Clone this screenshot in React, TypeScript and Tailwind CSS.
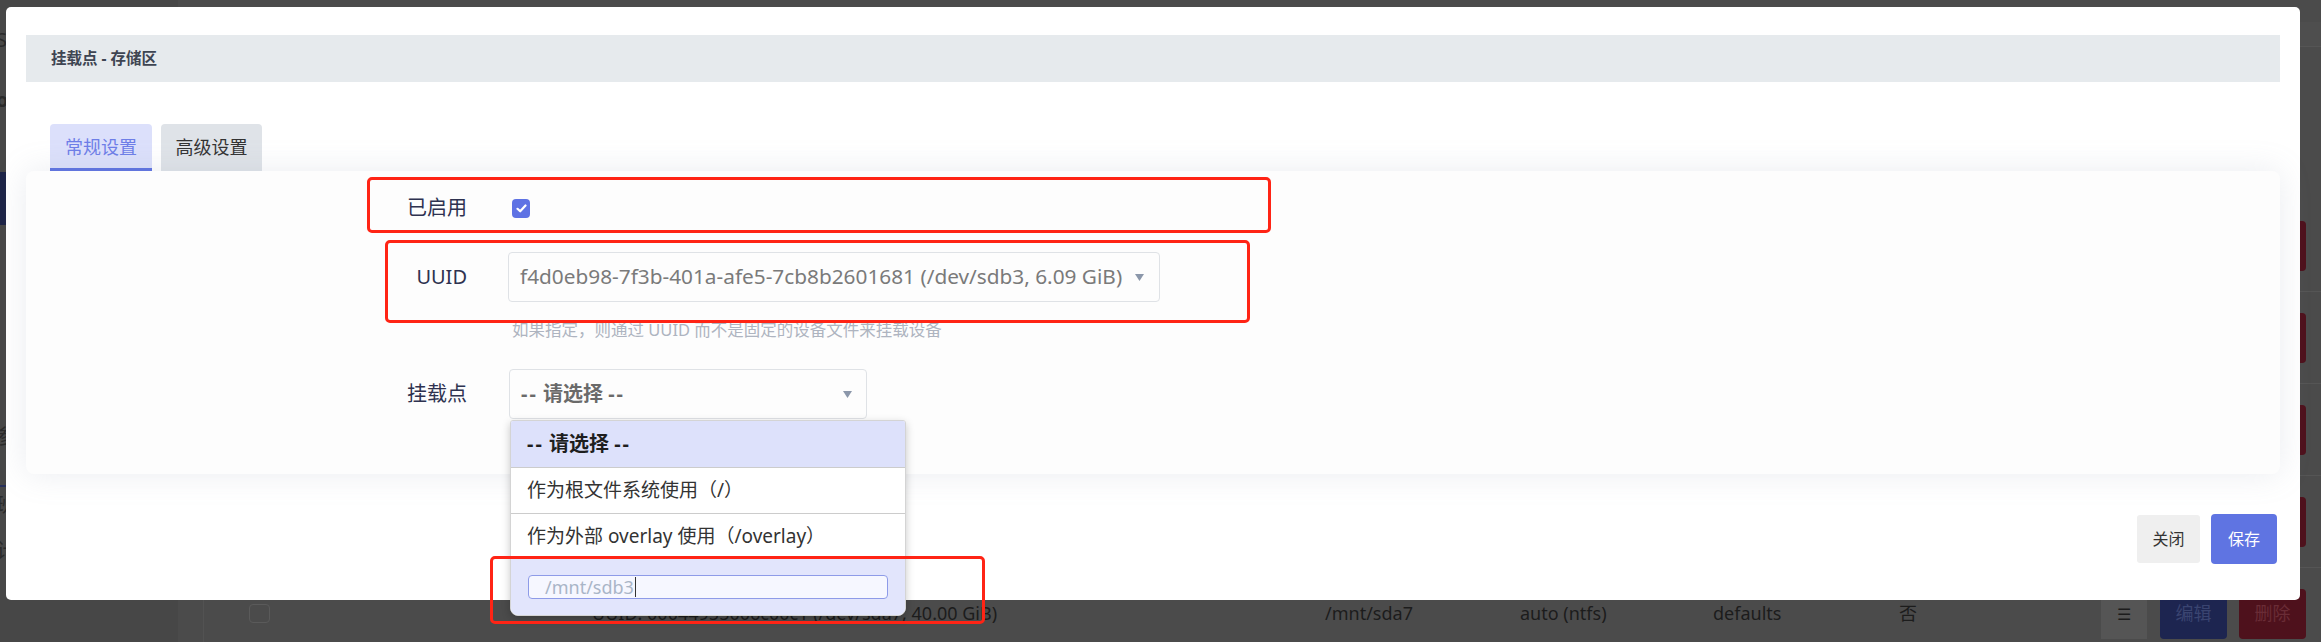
import React from "react";

// Background page (dimmed under the modal overlay)
function BgRow({ uuid, mount, fs }: { uuid: string; mount: string; fs: string }) {
  return (
    <div className="flex h-[92px] shrink-0 items-center border-b border-[#555555] text-[18px] text-[#1c1c1c]">
      <div className="w-[388px] shrink-0 pl-[45px]">
        <div className="h-[19px] w-[21px] rounded-[4px] border border-[#5a5a5a]" />
      </div>
      <div className="w-[733px] shrink-0 whitespace-nowrap">{uuid}</div>
      <div className="w-[195px] shrink-0">{mount}</div>
      <div className="w-[193px] shrink-0">{fs}</div>
      <div className="w-[186px] shrink-0">defaults</div>
      <div className="w-[202px] shrink-0">否</div>
      <div className="flex h-[50px] w-[46px] items-center justify-center bg-[#555555] text-[16px]">☰</div>
      <div className="ml-[13px] flex h-[50px] w-[67px] items-center justify-center rounded-[4px] bg-[#1d2550] text-[#3a4470]">
        编辑
      </div>
      <div className="ml-[12px] flex h-[50px] w-[67px] items-center justify-center rounded-[4px] bg-[#4e111c] text-[#6a2c36]">
        删除
      </div>
    </div>
  );
}

function Arrow() {
  return (
    <svg width="9" height="7" viewBox="0 0 9 7" className="shrink-0">
      <path d="M0 0h9L4.5 7z" fill="#8b97aa" />
    </svg>
  );
}

export default function App() {
  return (
    <div
      className="relative h-[642px] w-[2321px] overflow-hidden bg-[#4b4b4b]"
      style={{ fontFamily: '"Noto Sans", "Noto Sans CJK SC", sans-serif' }}
    >
      {/* page behind */}
      <div className="flex h-full">
        <aside className="flex w-[178px] shrink-0 flex-col bg-[#474747] text-[20px] leading-[24px] text-[#2a2a2a]">
          <div className="mt-[28px] -ml-[4px]">Status</div>
          <div className="mt-[36px] -ml-[4px] font-bold">opkg</div>
          <div className="mt-[60px] h-[53px] bg-[#1d2447]" />
          <div className="mt-[200px] -ml-[4px]">参数设置</div>
          <div className="mt-[36px] h-[2px] bg-[#27305a]" />
          <div className="mt-[6px] -ml-[4px]">班级</div>
          <div className="mt-[22px] -ml-[4px]">计划任务</div>
        </aside>
        <main className="flex flex-1 flex-col pl-[25px]">
          <div className="h-[22px] shrink-0" />
          <div className="h-[25px] shrink-0 border-b border-[#555555] bg-[#4e4e4e]" />
          <div className="h-[153px] shrink-0" />
          <div className="flex flex-col border-l border-[#525252]">
            <BgRow uuid="UUID: 7a1c0e2b9f3d4e55 (/dev/sda1, 100.00 GiB)" mount="/mnt/sda1" fs="auto (ntfs)" />
            <BgRow uuid="UUID: 3b9e0f0a11c2d7e4 (/dev/sda3, 60.00 GiB)" mount="/mnt/sda3" fs="auto (ntfs)" />
            <BgRow uuid="UUID: 5d0c2a8e77b1f903 (/dev/sda5, 80.00 GiB)" mount="/mnt/sda5" fs="auto (ntfs)" />
            <BgRow uuid="UUID: 9e6f4d21c0a3b5e8 (/dev/sda6, 50.00 GiB)" mount="/mnt/sda6" fs="auto (ntfs)" />
            <BgRow uuid="UUID: 00044955006c00c1 (/dev/sda7, 40.00 GiB)" mount="/mnt/sda7" fs="auto (ntfs)" />
          </div>
        </main>
      </div>

      {/* modal */}
      <div className="absolute left-[6px] top-[7px] flex h-[593px] w-[2294px] flex-col rounded-[5px] bg-white px-[20px] pt-[28px]">
        <div className="flex h-[47px] items-center bg-[#e6eaed] pl-[25px] text-[15.5px] font-bold text-[#3e4552]">
          挂载点 - 存储区
        </div>

        <div className="mt-[42px] flex gap-[9px] pl-[24px] text-[18px]">
          <div className="flex h-[47px] w-[102px] items-center justify-center rounded-t-[4px] border-b-[3px] border-[#5d72e2] bg-[#dce0fb] pt-[3px] text-[#6e7ee8]">
            常规设置
          </div>
          <div className="flex h-[47px] w-[101px] items-center justify-center rounded-t-[4px] bg-[#dfe3e8] text-[#333333]">
            高级设置
          </div>
        </div>

        <div className="flex h-[303px] flex-col rounded-[8px] bg-[#fdfdfd] pt-[12px] shadow-[0_0_32px_rgba(136,152,170,0.18)]">
          <div className="flex h-[50px] items-center">
            <div className="w-[441px] text-right text-[20px] text-[#2e3250]">已启用</div>
            <div className="ml-[45px] flex h-[19px] w-[18px] items-center justify-center rounded-[4px] bg-[#5e72e4]">
              <svg width="11" height="9" viewBox="0 0 11 9">
                <path d="M1.5 4.8 4.2 7.3 9.5 1.5" fill="none" stroke="white" strokeWidth="2.2" strokeLinecap="round" strokeLinejoin="round" />
              </svg>
            </div>
          </div>

          <div className="mt-[19px] flex h-[50px] items-center">
            <div className="w-[441px] text-right text-[20px] text-[#2e3250]">UUID</div>
            <div className="ml-[41px] flex h-[50px] w-[652px] items-center justify-between rounded-[4px] border border-[#dfe2e6] pl-[11px] pr-[15px] text-[20.8px] text-[#7a7a7a]">
              <span className="whitespace-nowrap">f4d0eb98-7f3b-401a-afe5-7cb8b2601681 (/dev/sdb3, 6.09 GiB)</span>
              <Arrow />
            </div>
          </div>
          <div className="mt-[18px] pl-[486px] text-[16.5px] leading-[20px] text-[#aeb4c0]">
            如果指定，则通过 UUID 而不是固定的设备文件来挂载设备
          </div>

          <div className="mt-[29px] flex h-[50px] items-center">
            <div className="w-[441px] text-right text-[20px] text-[#2e3250]">挂载点</div>
            <div className="relative ml-[42px]">
              <div className="flex h-[50px] w-[358px] items-center justify-between rounded-[4px] border border-[#dfe2e6] pl-[11px] pr-[14px] text-[20px] font-bold text-[#6a6a6a]">
                <span>
                  <span className="tracking-[2px]">--</span> 请选择 <span className="tracking-[2px]">--</span>
                </span>
                <Arrow />
              </div>
              {/* open dropdown list */}
              <div className="absolute left-[1px] top-[51px] z-10 flex w-[396px] flex-col overflow-hidden rounded-b-[8px] rounded-t-[3px] border border-[#d4d4d4] bg-white text-[19px] shadow-[0_3px_8px_rgba(0,0,0,0.22)]">
                <div className="flex h-[47px] items-center border-b border-[#cccccc] bg-[#dde1fb] pl-[16px] text-[20px] font-bold text-[#1e1e1e]">
                  <span className="tracking-[2px]">--</span>&nbsp;请选择&nbsp;<span className="tracking-[2px]">--</span>
                </div>
                <div className="flex h-[46px] items-center border-b border-[#cccccc] pl-[16px] text-[#333333]">
                  作为根文件系统使用（/）
                </div>
                <div className="flex h-[44px] items-center pl-[16px] text-[#333333]">
                  作为外部 overlay 使用（/overlay）
                </div>
                <div className="flex h-[57px] flex-col bg-[#e2e5fc] px-[17px] pt-[17px]">
                  <div className="flex h-[24px] items-center rounded-[4px] border border-[#8e9be8] bg-[#f6f7ff] pl-[16px] text-[18px] leading-none text-[#a9b5c7]">
                    <span>/mnt/sdb3</span>
                    <span className="ml-[1px] h-[20px] w-px bg-[#333333]" />
                  </div>
                </div>
              </div>
            </div>
          </div>
        </div>

        <div className="mt-[40px] flex items-center justify-end gap-[11px] pr-[3px] text-[16px]">
          <div className="flex h-[48px] w-[63px] items-center justify-center rounded-[3px] bg-[#efefef] text-[#333333]">
            关闭
          </div>
          <div className="flex h-[50px] w-[66px] items-center justify-center rounded-[4px] bg-[#5f74e2] text-white">
            保存
          </div>
        </div>
      </div>

      {/* red annotation boxes */}
      <div className="pointer-events-none absolute left-[367px] top-[177px] z-20 h-[56px] w-[904px] rounded-[5px] border-[3px] border-[#ff2415]" />
      <div className="pointer-events-none absolute left-[385px] top-[240px] z-20 h-[83px] w-[865px] rounded-[5px] border-[3px] border-[#ff2415]" />
      <div className="pointer-events-none absolute left-[490px] top-[556px] z-20 h-[68px] w-[495px] rounded-[5px] border-[3px] border-[#ff2415]" />
    </div>
  );
}
